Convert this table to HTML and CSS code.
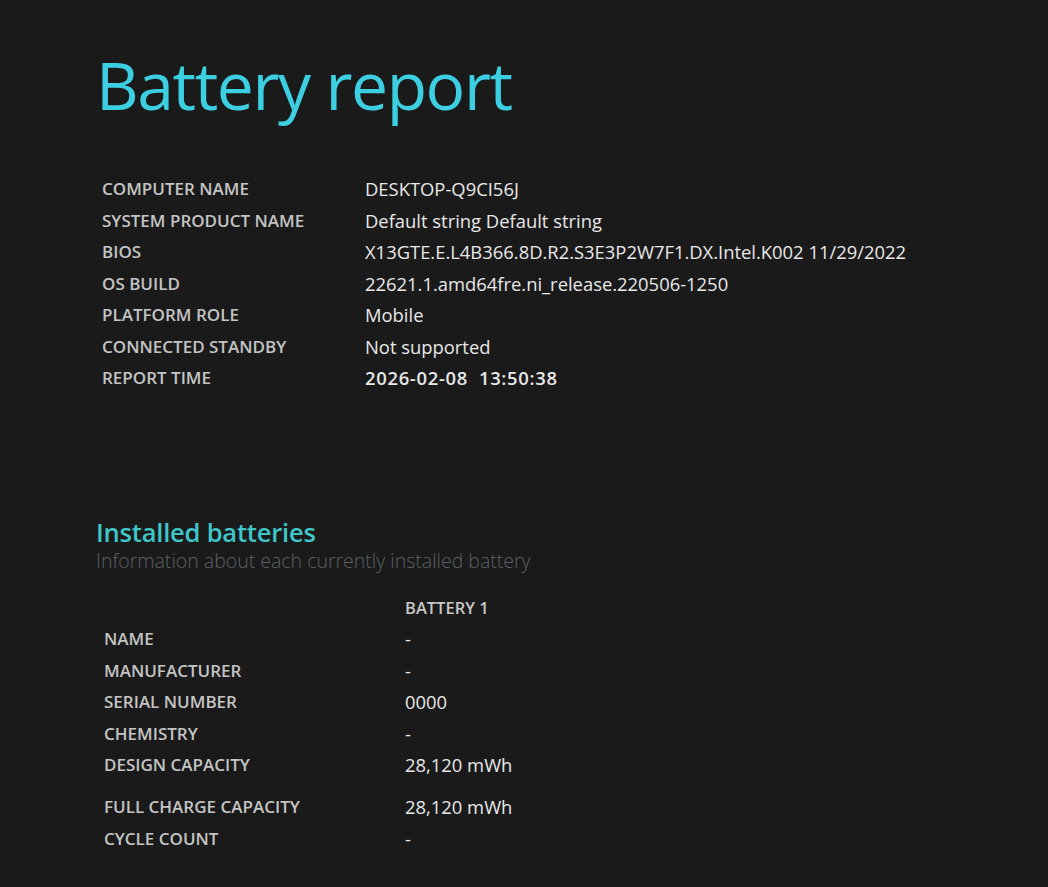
FILE: index.html
```html
<!DOCTYPE html>
<html>
<head>
<meta charset="utf-8">
<link rel="stylesheet" href="styles.css">
</head>
<body>
<div class="page">
  <h1 class="title">Battery report</h1>
  <table class="info">
    <tr><td class="label">COMPUTER NAME</td><td class="value">DESKTOP-Q9CI56J</td></tr>
    <tr><td class="label">SYSTEM PRODUCT NAME</td><td class="value">Default string Default string</td></tr>
    <tr><td class="label">BIOS</td><td class="value">X13GTE.E.L4B366.8D.R2.S3E3P2W7F1.DX.Intel.K002 11/29/2022</td></tr>
    <tr><td class="label">OS BUILD</td><td class="value">22621.1.amd64fre.ni_release.220506-1250</td></tr>
    <tr><td class="label">PLATFORM ROLE</td><td class="value">Mobile</td></tr>
    <tr><td class="label">CONNECTED STANDBY</td><td class="value">Not supported</td></tr>
    <tr><td class="label">REPORT TIME</td><td class="value strong">2026-02-08&nbsp; 13:50:38</td></tr>
  </table>

  <h2 class="section">Installed batteries</h2>
  <div class="subtitle">Information about each currently installed battery</div>

  <table class="batt">
    <tr class="head"><td class="label"></td><td class="colhead">BATTERY 1</td></tr>
    <tr><td class="label">NAME</td><td class="value">-</td></tr>
    <tr><td class="label">MANUFACTURER</td><td class="value">-</td></tr>
    <tr><td class="label">SERIAL NUMBER</td><td class="value">0000</td></tr>
    <tr><td class="label">CHEMISTRY</td><td class="value">-</td></tr>
    <tr><td class="label">DESIGN CAPACITY</td><td class="value">28,120 mWh</td></tr>
    <tr class="gap"><td class="label">FULL CHARGE CAPACITY</td><td class="value">28,120 mWh</td></tr>
    <tr><td class="label">CYCLE COUNT</td><td class="value">-</td></tr>
  </table>
</div>
</body>
</html>
```
FILE: styles.css
```css
html, body {
  margin: 0;
  padding: 0;
  background: #1a1a1a;
  height: 100%;
}
body {
  font-family: "Open Sans", "Noto Sans", sans-serif;
  color: #e6e6e6;
}
.page {
  padding: 34px 0 0 96px;
}
.title {
  margin: 0;
  font-weight: 400;
  font-size: 66px;
  line-height: 100px;
  letter-spacing: -1.4px;
  color: #3ccfe1;
}
.info {
  border-collapse: collapse;
  margin: 39px 0 0 6px;
}
.info td {
  padding: 0;
  height: 31.5px;
  vertical-align: middle;
}
.info .label {
  width: 263px;
  font-size: 17px;
  font-weight: 600;
  color: #c4c4c4;
}
.value {
  font-size: 18.4px;
  color: #e8e8e8;
}
.value.strong {
  font-weight: 600;
  letter-spacing: 0.7px;
}
.section {
  margin: 122px 0 0 0;
  font-size: 25.5px;
  font-weight: 600;
  color: #3fc6c9;
  line-height: 32px;
  letter-spacing: -0.2px;
}
.subtitle {
  font-size: 19.5px;
  font-weight: 300;
  color: #596164;
  line-height: 26px;
}
.batt {
  border-collapse: collapse;
  margin: 18px 0 0 8px;
}
.batt td {
  padding: 0;
  height: 31.5px;
  vertical-align: middle;
}
.batt .label {
  width: 301px;
  font-size: 17px;
  font-weight: 600;
  color: #c4c4c4;
}
.batt .colhead {
  font-size: 16.5px;
  font-weight: 600;
  color: #c8c8c8;
}
.batt .gap td {
  padding-top: 10.5px;
}
```
